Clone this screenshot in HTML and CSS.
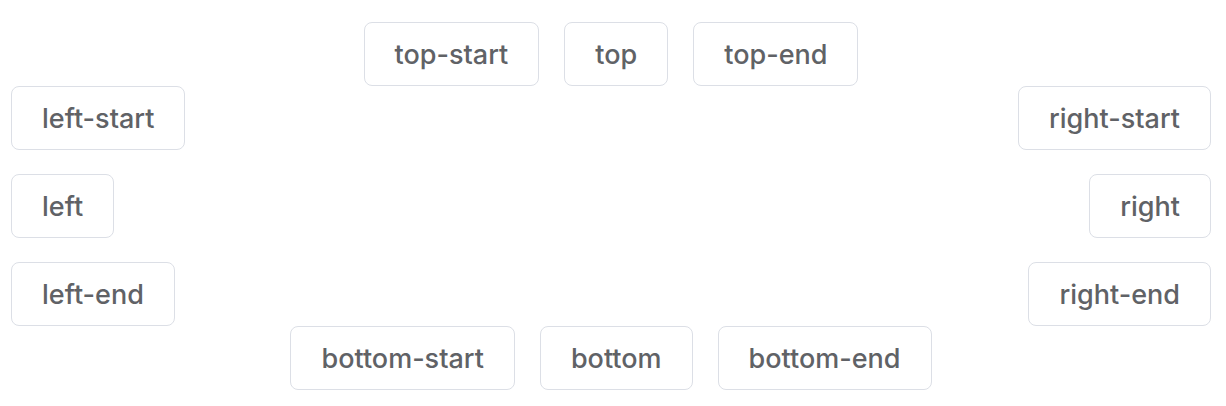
FILE: index.html
```html
<!DOCTYPE html>
<html>
<head>
<meta charset="utf-8">
<link rel="stylesheet" href="styles.css">
</head>
<body>
<div class="box">
  <div class="row center">
    <button class="btn">top-start</button>
    <button class="btn">top</button>
    <button class="btn">top-end</button>
  </div>
  <div class="middle">
    <div class="col col-left">
      <button class="btn">left-start</button>
      <button class="btn">left</button>
      <button class="btn">left-end</button>
    </div>
    <div class="col col-right">
      <button class="btn">right-start</button>
      <button class="btn">right</button>
      <button class="btn">right-end</button>
    </div>
  </div>
  <div class="row center">
    <button class="btn">bottom-start</button>
    <button class="btn">bottom</button>
    <button class="btn">bottom-end</button>
  </div>
</div>
</body>
</html>
```
FILE: styles.css
```css
html, body {
  margin: 0;
  padding: 0;
  background: #ffffff;
}
.box {
  width: 1200px;
  margin-left: 11px;
  padding-top: 22px;
}
.row {
  display: flex;
}
.center {
  justify-content: center;
  gap: 25px;
}
.middle {
  display: flex;
  justify-content: space-between;
}
.col {
  display: flex;
  flex-direction: column;
  gap: 24px;
}
.col-left {
  align-items: flex-start;
}
.col-right {
  align-items: flex-end;
}
.btn {
  box-sizing: border-box;
  height: 64px;
  padding: 0 30px;
  display: inline-flex;
  align-items: center;
  justify-content: center;
  background: #ffffff;
  border: 1px solid #dcdfe6;
  border-radius: 8px;
  color: #606266;
  font-family: Inter, "Liberation Sans", Arial, sans-serif;
  font-size: 27px;
  font-weight: 500;
  letter-spacing: 0;
  line-height: 1;
  white-space: nowrap;
}
```
